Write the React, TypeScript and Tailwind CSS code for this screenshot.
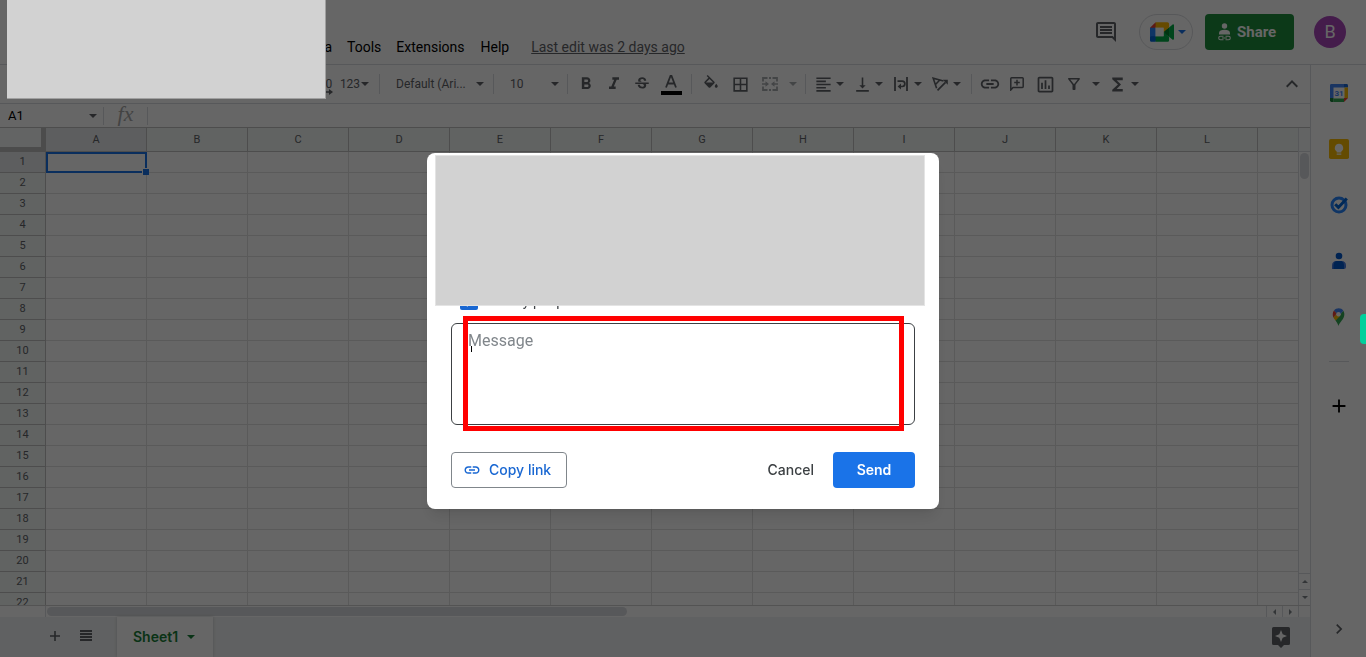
import React, { useState } from 'react';
import {
  MdAdd,
  MdBorderAll,
  MdChevronRight,
  MdFormatAlignLeft,
  MdFormatBold,
  MdFormatItalic,
  MdFunctions,
  MdKeyboardArrowUp,
  MdLink,
  MdOutlineFilterAlt,
  MdOutlineInsertChart,
  MdOutlineInsertComment,
  MdStrikethroughS,
  MdVerticalAlignBottom,
} from 'react-icons/md';

const COLUMNS = ['A', 'B', 'C', 'D', 'E', 'F', 'G', 'H', 'I', 'J', 'K', 'L'];
const ROWS = Array.from({ length: 22 }, (_, i) => i + 1);

const Caret: React.FC<{ className?: string }> = ({ className = '' }) => (
  <svg viewBox="0 0 8 4" className={`h-1 w-2 shrink-0 ${className}`} fill="currentColor" aria-hidden="true">
    <path d="M0 0h8L4 4z" />
  </svg>
);

const Separator: React.FC = () => (
  <div className="flex w-[10px] shrink-0 justify-center pl-px">
    <div className="h-5 w-px bg-[#dadce0]" />
  </div>
);

const ToolButton: React.FC<{ label: string; className?: string; children: React.ReactNode }> = ({
  label,
  className = 'w-7',
  children,
}) => (
  <button type="button" aria-label={label} className={`flex h-7 shrink-0 items-center justify-center ${className}`}>
    {children}
  </button>
);

const MenuToolButton: React.FC<{ label: string; children: React.ReactNode }> = ({ label, children }) => (
  <button type="button" aria-label={label} className="flex h-7 w-[39px] shrink-0 items-center">
    <span className="flex w-[26px] justify-center">{children}</span>
    <Caret />
  </button>
);

const FillIcon: React.FC = () => (
  <svg viewBox="0 0 24 24" className="h-[18px] w-[18px]" fill="currentColor" aria-hidden="true">
    <path d="M16.56 8.94L7.62 0 6.21 1.41l2.38 2.38-5.15 5.15c-.59.59-.59 1.54 0 2.12l5.5 5.5c.29.29.68.44 1.06.44s.77-.15 1.06-.44l5.5-5.5c.59-.58.59-1.53 0-2.12zM5.21 10L10 5.21 14.79 10H5.21zM19 11.500s-2 2.170-2 3.500c0 1.100.9 2 2 2s2-.9 2-2c0-1.330-2-3.500-2-3.500z" />
  </svg>
);

const MergeIcon: React.FC = () => (
  <svg viewBox="0 0 16 14" className="h-[14px] w-4" fill="none" stroke="currentColor" aria-hidden="true">
    <path d="M1 4.500V1h4.500M7 1h2M10.500 1H15v3.500M1 9.500V13h4.500M7 13h2M10.500 13H15V9.500" strokeWidth="1.800" />
    <path d="M0 7h4M16 7h-4" strokeWidth="1.500" />
    <path d="M3.500 4.300L7 7 3.500 9.700zM12.500 4.300L9 7l3.500 2.700z" fill="currentColor" stroke="none" />
  </svg>
);

const WrapIcon: React.FC = () => (
  <svg viewBox="0 0 14 14" className="h-[14px] w-[14px]" fill="none" stroke="currentColor" aria-hidden="true">
    <path d="M1 0v14M13 0v14" strokeWidth="1.800" />
    <path d="M3.500 4.200h4.700a2.600 2.600 0 0 1 0 5.300H6" strokeWidth="1.700" />
    <path d="M7 6.500v6L3.600 9.500z" fill="currentColor" stroke="none" />
  </svg>
);

const RotateIcon: React.FC = () => (
  <svg viewBox="0 0 16 14" className="h-[14px] w-4" fill="none" stroke="currentColor" strokeWidth="1.600" aria-hidden="true">
    <path d="M11.500 4L1.200 1.200 4.600 11.200M7.800 3L3.500 7.500" />
    <path d="M5.500 13.300l8-8" strokeWidth="1.800" />
    <path d="M15.800 2.800v5L10.800 2.800z" fill="currentColor" stroke="none" />
  </svg>
);

const AddCommentIcon: React.FC = () => (
  <svg viewBox="0 0 14 14" className="h-[14px] w-[14px]" fill="none" stroke="currentColor" strokeWidth="1.500" aria-hidden="true">
    <path d="M.8 13V1.600q0-.8.8-.8h10.800q.8 0 .8.8v8q0 .8-.8.8H3z" />
    <path d="M7 2.800v5.600M4.200 5.600h5.600" />
  </svg>
);

const MeetIcon: React.FC = () => (
  <svg viewBox="0 0 87.5 72" className="h-5 w-6" aria-hidden="true">
    <path fill="#00832d" d="M49.5 36l8.53 9.75 11.47 7.33 2-17.02-2-16.64-11.69 6.44z" />
    <path fill="#0066da" d="M0 51.5V66c0 3.315 2.685 6 6 6h14.5l3-10.96-3-9.54-9.95-3z" />
    <path fill="#e94235" d="M20.5 0L0 20.5l10.55 3 9.95-3 2.95-9.41z" />
    <path fill="#2684fc" d="M20.5 20.5H0v31h20.5z" />
    <path
      fill="#00ac47"
      d="M82.6 8.68L69.5 19.42v33.66l13.16 10.79c1.97 1.54 4.85.135 4.85-2.37V11c0-2.535-2.945-3.925-4.91-2.32zM49.5 36v15.5h-29V72h43c3.315 0 6-2.685 6-6V53.08z"
    />
    <path fill="#ffba00" d="M63.5 0h-43v20.5h29V36l20-16.57V6c0-3.315-2.685-6-6-6z" />
    <path fill="#fff" d="M20.500 20.500h29v31h-29z" />
  </svg>
);

const ShareIcon: React.FC = () => (
  <svg viewBox="0 0 13 18" className="h-[18px] w-[13px]" fill="currentColor" aria-hidden="true">
    <circle cx="6.5" cy="3" r="2.7" />
    <path d="M1 11.500V10c0-2 2.400-3.200 5.500-3.200S12 8 12 10v1.500z" />
    <path
      d="M5.500 13.200H2.500a1.800 1.800 0 0 0 0 3.600h3M7.500 13.200h3a1.800 1.800 0 0 1 0 3.600h-3M4 15h5"
      fill="none"
      stroke="currentColor"
      strokeWidth="1.1"
    />
  </svg>
);

const CalendarIcon: React.FC = () => (
  <svg viewBox="0 0 20 20" className="h-5 w-5" aria-hidden="true">
    <path fill="#fff" d="M4 4h12v12H4z" />
    <path fill="#4285f4" d="M2.400 1H15v3.500H4.500V15H1V2.400Q1 1 2.400 1z" />
    <path fill="#1967d2" d="M15 1h2.600Q19 1 19 2.400V4.500h-4z" />
    <path fill="#fbbc04" d="M15.500 4.500H19V15h-3.500z" />
    <path fill="#34a853" d="M4.500 15.500H15V19H4.500z" />
    <path fill="#188038" d="M1 15h3.500v4H2.400Q1 19 1 17.600z" />
    <path fill="#ea4335" d="M15 15h4l-4 4z" />
    <text x="10" y="13" textAnchor="middle" fontSize="8" fontWeight="700" fontFamily="Roboto, sans-serif" fill="#4285f4">
      31
    </text>
  </svg>
);

const KeepIcon: React.FC = () => (
  <svg viewBox="0 0 20 20" className="h-5 w-5" aria-hidden="true">
    <rect width="20" height="20" rx="1.8" fill="#fbbc04" />
    <path fill="#fff" d="M10 4.800a4.200 4.200 0 0 0-2.300 7.700v.9h4.600v-.9A4.200 4.200 0 0 0 10 4.800zM7.700 14.400h4.600v1.300H7.700z" />
  </svg>
);

const TasksIcon: React.FC = () => (
  <svg viewBox="0 0 20 20" className="h-5 w-5" fill="none" aria-hidden="true">
    <circle cx="10" cy="10" r="7" stroke="#2684fc" strokeWidth="3" />
    <path d="M6.200 9.200l3.200 3.200 8.400-9" stroke="#0066da" strokeWidth="3" />
  </svg>
);

const ContactsIcon: React.FC = () => (
  <svg viewBox="0 0 20 20" className="h-5 w-5" aria-hidden="true">
    <circle cx="10" cy="5" r="3.3" fill="#0057cc" />
    <path fill="#4c7ee0" d="M3 18v-3.500Q3 10 7.500 10h5q4.500 0 4.500 4.500V16q0 2-2 2z" />
    <path fill="#0057cc" d="M4.500 18v-4Q5 10 8 10h4.500q2.500 1 2.500 4v4z" />
  </svg>
);

const MapsIcon: React.FC = () => (
  <svg viewBox="0 0 14 20" className="h-[18px] w-[13px]" aria-hidden="true">
    <path fill="#34a853" d="M7 20c1-4 6.500-7.500 6.500-13 0-1.500-.5-3-1.200-4L3.600 13.500C5 15.600 6.300 17.500 7 20z" />
    <path fill="#fbbc04" d="M1.300 10.500c.6 1.300 1.500 2.300 2.400 3.500L9 8.500 5 6z" />
    <path fill="#ea4335" d="M2 2.800C.4 4.800.2 8 1.300 10.500L5.200 6z" />
    <path fill="#4285f4" d="M2 2.800C4.300-.2 9.800-.9 12.300 3L9 7 5.200 6z" />
    <circle cx="7" cy="7" r="2.5" fill="#fff" />
  </svg>
);

const ExploreIcon: React.FC = () => (
  <svg viewBox="0 0 18 21" className="h-[21px] w-[18px]" aria-hidden="true">
    <path fill="#5f6368" d="M1.500 0h15Q18 0 18 1.500v15q0 1.500-1.500 1.500H12l-3 3-3-3H1.500Q0 18 0 16.500v-15Q0 0 1.500 0z" />
    <path fill="#fff" d="M9 3l1.700 4.300L15 9l-4.300 1.700L9 15l-1.700-4.300L3 9l4.300-1.700z" />
  </svg>
);

const Header: React.FC = () => (
  <header className="flex h-[65px] shrink-0 items-center border-b border-[#dadce0] pr-5">
    <nav className="flex items-center self-end pb-[7px] pl-[302px] text-sm leading-5 text-black">
      <button type="button" className="w-[30px] text-right">Data</button>
      <button type="button" className="ml-[15px]">Tools</button>
      <button type="button" className="ml-[15px]">Extensions</button>
      <button type="button" className="ml-4">Help</button>
      <a href="#history" className="ml-[22px] text-[#5f6368] underline">Last edit was 2 days ago</a>
    </nav>
    <div className="ml-auto flex items-center">
      <button type="button" aria-label="Open comment history" className="mr-[21px] text-[#5f6368]">
        <MdOutlineInsertComment className="h-6 w-6" />
      </button>
      <button
        type="button"
        aria-label="Join a call"
        className="flex h-9 w-[54px] items-center gap-1 rounded-full border border-[#dadce0] pl-[10px] text-[#1a73e8]"
      >
        <MeetIcon />
        <Caret />
      </button>
      <button
        type="button"
        className="ml-3 flex h-9 w-[89px] items-center gap-[6px] rounded bg-[#1e8e3e] pl-[13px] text-[15px] font-bold text-white"
      >
        <ShareIcon />
        Share
      </button>
      <button
        type="button"
        aria-label="Account"
        className="ml-5 h-8 w-8 rounded-full bg-[#ab47bc] text-lg leading-8 text-white"
      >
        B
      </button>
    </div>
  </header>
);

const Toolbar: React.FC = () => (
  <div
    role="toolbar"
    className="flex h-[39px] shrink-0 items-center overflow-hidden border-b border-[#dadce0] pl-[313px] text-[#5f6368]"
  >
    <ToolButton label="Increase decimal places" className="w-[22px]">
      <span className="relative text-xs leading-4">
        .00
        <svg viewBox="0 0 12 6" className="absolute -right-px top-[13px] h-[6px] w-3" aria-hidden="true">
          <path d="M0 3h9" stroke="currentColor" strokeWidth="1.5" />
          <path d="M8 0l4 3-4 3z" fill="currentColor" />
        </svg>
      </span>
    </ToolButton>
    <ToolButton label="More formats" className="w-[39px] text-xs">
      123
      <Caret className="ml-px" />
    </ToolButton>
    <Separator />
    <ToolButton label="Font" className="w-[104px] text-xs">
      <span className="flex w-full items-center justify-between pl-3 pr-1">
        Default (Ari...
        <Caret />
      </span>
    </ToolButton>
    <Separator />
    <ToolButton label="Font size" className="w-16 text-xs">
      <span className="flex w-full items-center justify-between pl-3 pr-[3px]">
        10
        <Caret />
      </span>
    </ToolButton>
    <Separator />
    <ToolButton label="Bold"><MdFormatBold className="h-5 w-5" /></ToolButton>
    <ToolButton label="Italic"><MdFormatItalic className="h-5 w-5" /></ToolButton>
    <ToolButton label="Strikethrough"><MdStrikethroughS className="h-[18px] w-[18px]" /></ToolButton>
    <ToolButton label="Text color" className="w-[30px]">
      <span className="flex flex-col items-center pt-px">
        <svg viewBox="0 0 12 13" className="h-[13px] w-3" fill="none" stroke="currentColor" strokeWidth="1.8" aria-hidden="true">
          <path d="M1 12.500L5.500 1h1L11 12.500M2.800 8.500h6.400" />
        </svg>
        <span className="mt-[3px] h-1 w-[21px] bg-black" />
      </span>
    </ToolButton>
    <Separator />
    <ToolButton label="Fill color" className="w-[29px]"><FillIcon /></ToolButton>
    <ToolButton label="Borders" className="w-[30px]"><MdBorderAll className="h-[19px] w-[19px]" /></ToolButton>
    <ToolButton label="Merge cells" className="w-[30px] text-[#a9acb0]"><MergeIcon /></ToolButton>
    <ToolButton label="Select merge type" className="w-[15px] text-[#a9acb0]"><Caret /></ToolButton>
    <Separator />
    <MenuToolButton label="Horizontal align"><MdFormatAlignLeft className="h-[19px] w-[19px]" /></MenuToolButton>
    <MenuToolButton label="Vertical align"><MdVerticalAlignBottom className="h-[19px] w-[19px]" /></MenuToolButton>
    <MenuToolButton label="Text wrapping"><WrapIcon /></MenuToolButton>
    <MenuToolButton label="Text rotation"><RotateIcon /></MenuToolButton>
    <Separator />
    <ToolButton label="Insert link" className="w-[27px]"><MdLink className="h-[22px] w-[22px]" /></ToolButton>
    <ToolButton label="Insert comment"><AddCommentIcon /></ToolButton>
    <ToolButton label="Insert chart"><MdOutlineInsertChart className="h-[21px] w-[21px]" /></ToolButton>
    <ToolButton label="Create a filter" className="w-[30px]"><MdOutlineFilterAlt className="h-[18px] w-[18px]" /></ToolButton>
    <ToolButton label="Filter views" className="w-[14px]"><Caret /></ToolButton>
    <ToolButton label="Functions"><MdFunctions className="h-[21px] w-[21px]" /></ToolButton>
    <ToolButton label="More functions" className="w-2"><Caret /></ToolButton>
    <ToolButton label="Hide the menus" className="ml-auto w-9"><MdKeyboardArrowUp className="h-6 w-6" /></ToolButton>
  </div>
);

const FormulaBar: React.FC = () => (
  <div className="flex h-6 shrink-0 items-center border-b border-[#c0c0c0]">
    <input
      aria-label="Name box"
      defaultValue="A1"
      className="w-[89px] bg-transparent pl-2 text-[13px] leading-4 text-black outline-none"
    />
    <Caret className="text-[#5f6368]" />
    <div className="ml-[6px] h-[18px] w-px bg-[#dadce0]" />
    <span className="w-[43px] pb-[3px] text-center font-['Liberation_Serif',serif] text-[22px] leading-5 text-[#a8a8a8] italic">
      fx
    </span>
    <div className="h-[18px] w-px bg-[#dadce0]" />
    <input aria-label="Formula" className="min-w-0 flex-1 bg-transparent px-2 text-[13px] outline-none" />
  </div>
);

const headCell = 'border-b border-r border-[#c0c0c0] p-0 font-normal';

const Grid: React.FC = () => (
  <div className="flex min-h-0 flex-1">
    <div className="min-w-0 flex-1 overflow-hidden">
      <table className="w-full table-fixed border-separate border-spacing-0 text-[11px] leading-4 text-[#5f6368]">
        <colgroup>
          <col className="w-[46px]" />
          {COLUMNS.map((c) => (
            <col key={c} className="w-[101px]" />
          ))}
          <col />
        </colgroup>
        <thead>
          <tr className="h-6">
            <th aria-label="Select all" className="border-b-[5px] border-r-[5px] border-[#bdbdbd] bg-[#f8f9fa] p-0" />
            {COLUMNS.map((c) => (
              <th key={c} className={`${headCell} ${c === 'A' ? 'bg-[#e8eaed]' : 'bg-[#f3f7f5]'}`}>
                {c}
              </th>
            ))}
            <th aria-label="M" className="border-b border-[#c0c0c0] bg-[#f3f7f5] p-0" />
          </tr>
        </thead>
        <tbody>
          {ROWS.map((r) => (
            <tr key={r} className="h-[21px]">
              <th className={`${headCell} ${r === 1 ? 'bg-[#e8eaed]' : 'bg-[#f3f7f5]'}`}>{r}</th>
              {COLUMNS.map((c) => (
                <td key={c} className="relative border-b border-r border-[#e0e0e0] p-0">
                  {r === 1 && c === 'A' && (
                    <div className="absolute -bottom-px -right-px left-0 top-0 z-10 border-2 border-[#1a73e8]">
                      <div className="absolute -bottom-1 -right-1 h-[7px] w-[7px] border-l border-t border-white bg-[#1a73e8]" />
                    </div>
                  )}
                </td>
              ))}
              <td className="border-b border-[#e0e0e0] p-0" />
            </tr>
          ))}
        </tbody>
      </table>
    </div>
    {/* Vertical scrollbar */}
    <div className="flex w-3 shrink-0 flex-col border-l border-[#dadce0] text-[#80868b]">
      <div className="h-6 shrink-0 border-b border-[#dadce0] bg-[#f8f9fa]" />
      <div className="flex-1 px-px pt-px">
        <div className="h-[26px] rounded-full bg-[#dadce0]" />
      </div>
      <button type="button" aria-label="Scroll up" className="flex h-4 items-center justify-center border-t border-[#dadce0]">
        <svg viewBox="0 0 6 3" className="h-[3px] w-[6px]" fill="currentColor"><path d="M0 3h6L3 0z" /></svg>
      </button>
      <button type="button" aria-label="Scroll down" className="flex h-4 items-center justify-center border-t border-[#dadce0]">
        <svg viewBox="0 0 6 3" className="h-[3px] w-[6px]" fill="currentColor"><path d="M0 0h6L3 3z" /></svg>
      </button>
    </div>
  </div>
);

const HorizontalScrollbar: React.FC = () => (
  <div className="flex h-3 shrink-0 border-t border-[#d0d0d0] text-[#80868b]">
    <div className="w-[46px] border-r border-[#dadce0]" />
    <div className="flex-1 px-px py-px">
      <div className="h-[9px] w-[580px] rounded-full bg-[#dadce0]" />
    </div>
    <button type="button" aria-label="Scroll left" className="flex w-4 items-center justify-center border-l border-[#dadce0]">
      <svg viewBox="0 0 3 6" className="h-[6px] w-[3px]" fill="currentColor"><path d="M3 0v6L0 3z" /></svg>
    </button>
    <button type="button" aria-label="Scroll right" className="flex w-4 items-center justify-center border-l border-[#dadce0]">
      <svg viewBox="0 0 3 6" className="h-[6px] w-[3px]" fill="currentColor"><path d="M0 0v6l3-3z" /></svg>
    </button>
    <div className="w-3 border-l border-[#dadce0]" />
  </div>
);

const SheetTabs: React.FC = () => (
  <footer className="flex h-10 shrink-0 items-center bg-[#f1f3f4] text-[#5f6368]">
    <button type="button" aria-label="Add sheet" className="ml-[46px] flex h-9 w-[18px] items-center justify-center pb-[3px]">
      <svg viewBox="0 0 10 10" className="h-[10px] w-[10px]" stroke="currentColor" strokeWidth="1.6" aria-hidden="true">
        <path d="M5 0v10M0 5h10" />
      </svg>
    </button>
    <button type="button" aria-label="All sheets" className="ml-4 flex h-9 w-3 items-center justify-center pb-[3px]">
      <svg viewBox="0 0 12 11" className="h-[11px] w-3" stroke="currentColor" strokeWidth="1.8" aria-hidden="true">
        <path d="M0 1h12M0 4h12M0 7h12M0 10h12" />
      </svg>
    </button>
    <button
      type="button"
      className="ml-[25px] flex h-10 w-24 items-center gap-[9px] bg-white pl-4 font-[Inter,sans-serif] text-sm font-semibold text-[#188038] shadow-[0_0_3px_rgba(60,64,67,0.25)]"
    >
      Sheet1
      <Caret />
    </button>
    <button type="button" aria-label="Explore" className="ml-auto mr-5">
      <ExploreIcon />
    </button>
  </footer>
);

const SIDE_APPS = [
  { label: 'Calendar', icon: <CalendarIcon /> },
  { label: 'Keep', icon: <KeepIcon /> },
  { label: 'Tasks', icon: <TasksIcon /> },
  { label: 'Contacts', icon: <ContactsIcon /> },
  { label: 'Maps', icon: <MapsIcon /> },
];

const SidePanel: React.FC = () => (
  <aside className="flex w-14 shrink-0 flex-col items-center border-l border-[#dadce0]">
    {SIDE_APPS.map((app) => (
      <button key={app.label} type="button" aria-label={app.label} className="flex h-14 w-14 items-center justify-center">
        {app.icon}
      </button>
    ))}
    <div className="mt-4 h-px w-5 bg-[#dadce0]" />
    <button type="button" aria-label="Get add-ons" className="mt-4 flex h-14 w-14 items-center justify-center text-black">
      <MdAdd className="h-[22px] w-[22px]" />
    </button>
    <button type="button" aria-label="Hide side panel" className="mt-auto flex h-14 w-14 items-center justify-center text-[#5f6368]">
      <MdChevronRight className="h-5 w-5" />
    </button>
  </aside>
);

const ShareDialog: React.FC = () => {
  const [message, setMessage] = useState('');
  const [notify, setNotify] = useState(true);

  return (
    <div
      role="dialog"
      aria-label="Share"
      className="relative w-[512px] rounded-lg bg-white px-6 pb-[21px] pt-[139px] shadow-lg"
    >
      <label className="flex h-[18px] items-center gap-[14px] text-sm leading-[18px] text-[#3c4043]">
        <input
          type="checkbox"
          checked={notify}
          onChange={(e) => setNotify(e.target.checked)}
          className="ml-[9px] h-[18px] w-[18px] accent-[#1967d2]"
        />
        Notify people
      </label>
      <div className="absolute left-2 right-[14px] top-[2px] h-[151px] border border-[#e4e4e4] bg-[#d2d2d2]" />

      <div className="relative mt-[13px]">
        <textarea
          aria-label="Message"
          placeholder="Message"
          value={message}
          onChange={(e) => setMessage(e.target.value)}
          className="block h-[102px] w-full resize-none rounded-md border border-[#3c4043] px-4 py-[5px] text-base text-[#3c4043] outline-none placeholder:text-[#80868b]"
        />
        <div className="absolute left-5 top-[23px] h-[6px] w-px bg-black" />
        <div className="pointer-events-none absolute -bottom-[6px] -top-[7px] left-3 right-[11px] border-[5px] border-[#ff0000]" />
      </div>

      <div className="mt-[27px] flex h-9 items-center font-[Inter,sans-serif] text-sm font-medium">
        <button
          type="button"
          className="flex h-9 w-[116px] items-center gap-2 rounded border border-[#80868b] pl-[11px] text-[#1967d2]"
        >
          <MdLink className="h-[18px] w-[18px]" />
          Copy link
        </button>
        <button type="button" className="ml-auto mr-[19px] text-[#3c4043]">
          Cancel
        </button>
        <button type="button" className="h-9 w-[82px] rounded bg-[#1a73e8] font-semibold text-white">
          Send
        </button>
      </div>
    </div>
  );
};

export default function App() {
  return (
    <div className="relative flex h-screen flex-col overflow-hidden bg-white font-[Roboto,sans-serif]">
      <Header />
      <div className="flex min-h-0 flex-1">
        <main className="flex min-w-0 flex-1 flex-col">
          <Toolbar />
          <FormulaBar />
          <Grid />
          <HorizontalScrollbar />
          <SheetTabs />
        </main>
        <SidePanel />
      </div>

      <div className="fixed inset-0 z-20 flex items-center justify-center bg-black/60 pt-[5px]">
        <ShareDialog />
      </div>
      <div className="absolute left-[7px] top-0 z-30 h-[99px] w-[319px] border-b border-r border-[#a0a0a0] bg-[#d2d2d2]" />
      <div className="absolute right-0 top-[314px] z-30 h-[30px] w-[6px] rounded-l bg-[#00d09c]" />
    </div>
  );
}
